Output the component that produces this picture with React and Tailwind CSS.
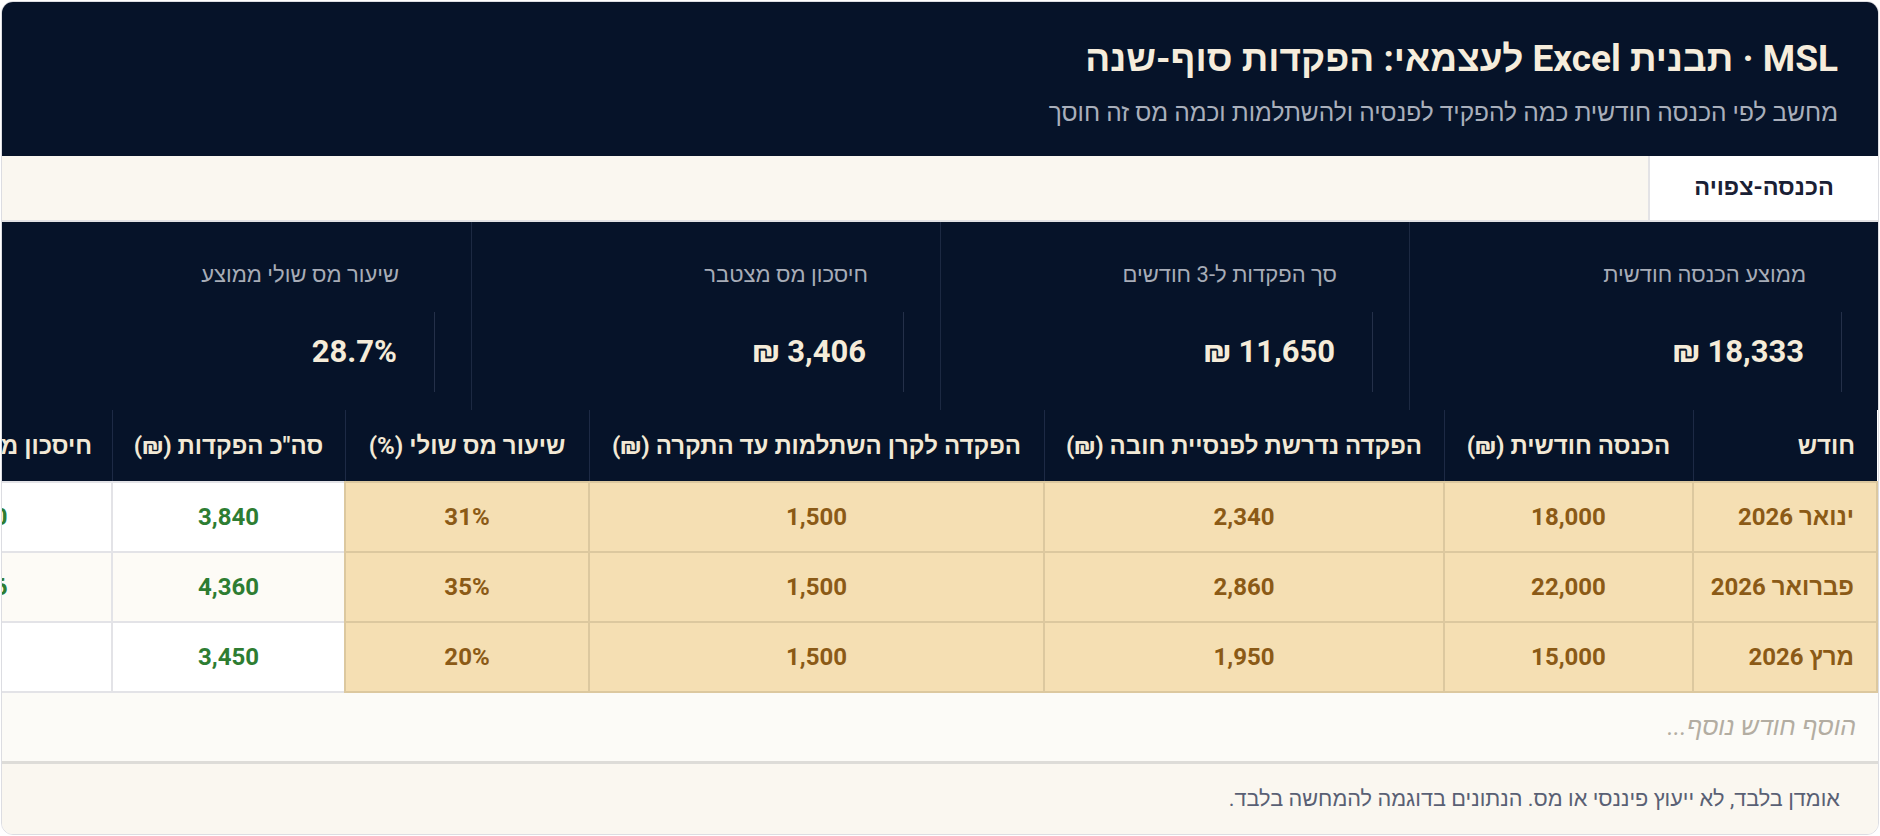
import React from 'react'

const stats = [
  { label: 'ממוצע הכנסה חודשית', value: '18,333 ₪' },
  { label: 'סך הפקדות ל-3 חודשים', value: '11,650 ₪' },
  { label: 'חיסכון מס מצטבר', value: '3,406 ₪' },
  { label: 'שיעור מס שולי ממוצע', value: '28.7%' },
]

const columns = [
  { title: 'חודש', width: 184 },
  { title: 'הכנסה חודשית (₪)', width: 249 },
  { title: 'הפקדה נדרשת לפנסיית חובה (₪)', width: 400 },
  { title: 'הפקדה לקרן השתלמות עד התקרה (₪)', width: 455 },
  { title: 'שיעור מס שולי (%)', width: 244 },
  { title: 'סה"כ הפקדות (₪)', width: 233 },
  { title: 'חיסכון מס משוער (₪)', width: 270 },
]

const rows = [
  ['ינואר 2026', '18,000', '2,340', '1,500', '31%', '3,840', '1,190'],
  ['פברואר 2026', '22,000', '2,860', '1,500', '35%', '4,360', '1,526'],
  ['מרץ 2026', '15,000', '1,950', '1,500', '20%', '3,450', '690'],
]

const App = () => {
  return (
    <div className="bg-white p-px font-['Roboto',sans-serif]">
      <div
        dir="rtl"
        className="flex h-[834px] flex-col overflow-hidden rounded-[12px] border border-[#dcdde2]"
      >
        {/* header */}
        <div className="h-[154px] shrink-0 bg-[#061329] px-[40px] pt-[35px]">
          <h1 className="text-[37px] font-bold leading-[44px] text-[#f6eddc]">
            MSL · תבנית Excel לעצמאי: הפקדות סוף-שנה
          </h1>
          <p className="mt-[17px] text-[24.5px] leading-[30px] text-[#a9afbb]">
            מחשב לפי הכנסה חודשית כמה להפקיד לפנסיה ולהשתלמות וכמה מס זה חוסך
          </p>
        </div>

        {/* tabs */}
        <div className="flex h-[66px] shrink-0 border-b-2 border-[#e2e2e4] bg-[#faf7f0]">
          <div className="flex w-[230px] items-center justify-center border-l-2 border-[#e3e3e6] bg-white text-[23.5px] font-bold text-[#1a2035]">
            הכנסה-צפויה
          </div>
        </div>

        {/* stats */}
        <div className="grid h-[188px] shrink-0 grid-cols-4 bg-[#061329]">
          {stats.map((s, i) => (
            <div
              key={s.label}
              className={i < 3 ? 'border-l border-[#1c2942] pt-[39px]' : 'pt-[39px]'}
            >
              <div className="pr-[72px] text-[22px] leading-[28px] text-[#a7acb7]">
                {s.label}
              </div>
              <div className="mr-[36px] mt-[23px] flex h-[80px] items-center border-r border-[#243049] pr-[37px] text-[31px] font-bold text-[#f5ecd9]">
                {s.value}
              </div>
            </div>
          ))}
        </div>

        {/* table */}
        <div className="shrink-0 overflow-hidden">
          <table className="table-fixed border-collapse" style={{ width: 2035 }}>
            <colgroup>
              {columns.map((c) => (
                <col key={c.title} style={{ width: c.width }} />
              ))}
            </colgroup>
            <thead>
              <tr className="h-[72px] bg-[#061329]">
                {columns.map((c, i) => (
                  <th
                    key={c.title}
                    className={
                      i === 0
                        ? 'whitespace-nowrap border-l border-[#1d2a45] pr-[22px] text-right text-[24px] font-bold text-[#f2e9d6]'
                        : 'whitespace-nowrap border-l border-[#1d2a45] text-center text-[24px] font-bold text-[#f2e9d6]'
                    }
                  >
                    {c.title}
                  </th>
                ))}
              </tr>
            </thead>
            <tbody>
              {rows.map((r, ri) => (
                <tr key={r[0]} className="h-[70px]">
                  {r.map((v, ci) => {
                    if (ci < 5) {
                      return (
                        <td
                          key={ci}
                          className={
                            ci === 0
                              ? 'border-2 border-[#dcc89f] bg-[#f5dfb3] pr-[22px] text-right text-[24px] font-bold text-[#8b5a16]'
                              : 'border-2 border-[#dcc89f] bg-[#f5dfb3] text-center text-[24px] font-bold text-[#8b5a16]'
                          }
                        >
                          {v}
                        </td>
                      )
                    }
                    return (
                      <td
                        key={ci}
                        className={
                          ri === 1
                            ? 'border-2 border-[#e3e3e7] bg-[#fdfbf6] text-center text-[24px] font-bold text-[#2e7d32]'
                            : 'border-2 border-[#e3e3e7] bg-white text-center text-[24px] font-bold text-[#2e7d32]'
                        }
                      >
                        {v}
                      </td>
                    )
                  })}
                </tr>
              ))}
            </tbody>
          </table>
        </div>

        {/* add row */}
        <div className="flex h-[68px] shrink-0 items-center bg-[#fcfbf7] px-[22px] text-[25px] italic text-[#b3ada2]">
          הוסף חודש נוסף...
        </div>

        {/* footer */}
        <div className="flex flex-1 items-center border-t-[3px] border-[#dddcd8] bg-[#faf7f0] px-[38px] text-[21.7px] text-[#596074]">
          אומדן בלבד, לא ייעוץ פיננסי או מס. הנתונים בדוגמה להמחשה בלבד.
        </div>
      </div>
    </div>
  )
}

export default App
